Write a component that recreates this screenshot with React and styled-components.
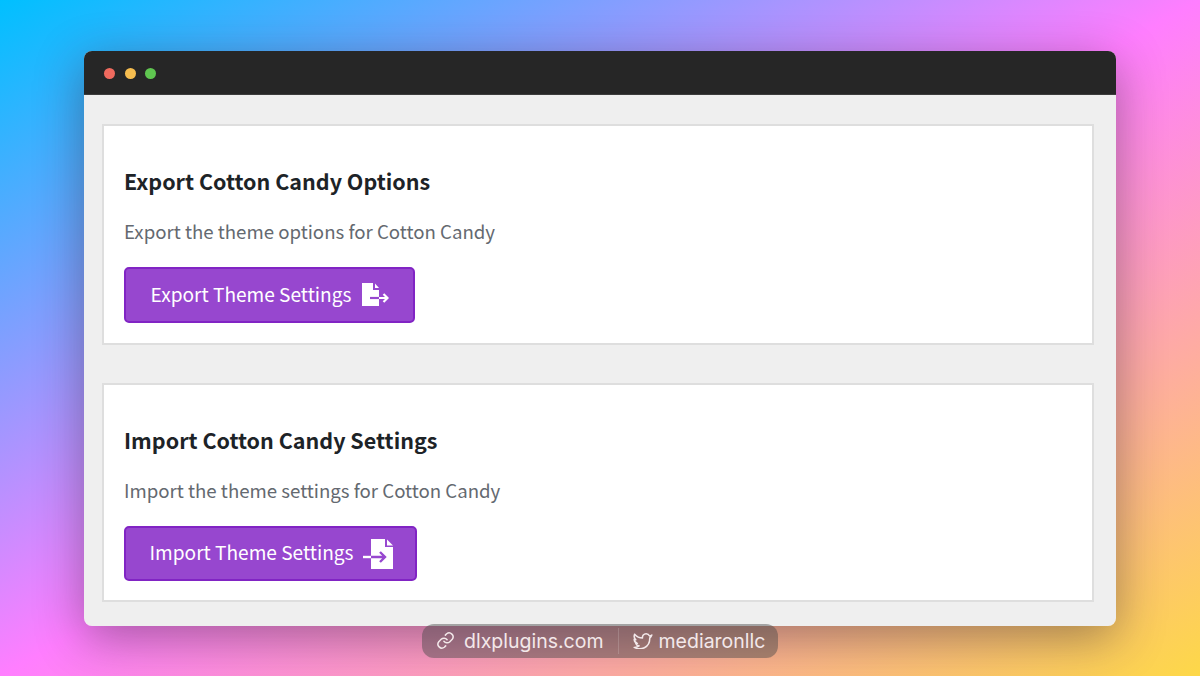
import React from "react";
import styled, { createGlobalStyle } from "styled-components";

const Global = createGlobalStyle`
  html, body { margin: 0; padding: 0; height: 100%; }
  body { font-family: "Noto Sans CJK SC", "Noto Sans", sans-serif; overflow: hidden; }
`;

const Page = styled.div`
  position: relative;
  width: 1200px;
  height: 676px;
  box-sizing: border-box;
  padding: 51px 84px 0;
  background: linear-gradient(to bottom right, #00c0ff 0%, #ff7eff 50%, #fdd848 100%);
  overflow: hidden;
`;

const Window = styled.div`
  width: 1032px;
  height: 575px;
  border-radius: 8px;
  overflow: hidden;
  display: flex;
  flex-direction: column;
  background: #efefef;
`;

const WindowShadow = styled.div`
  border-radius: 8px;
  box-shadow: 0 12px 48px rgba(40, 30, 40, 0.42);
`;

const TitleBar = styled.div`
  height: 44px;
  flex: none;
  box-sizing: border-box;
  padding: 1px 0 0 20px;
  display: flex;
  align-items: center;
  gap: 9.5px;
  background: #262626;
  border-bottom: 1px solid #3c3c3c;
`;

const Dot = styled.span`
  width: 11px;
  height: 11px;
  border-radius: 50%;
  background: ${(p) => p.$color};
`;

const Content = styled.div`
  flex: 1;
  display: flex;
  flex-direction: column;
  gap: 38px;
  padding: 29px 22px 0 18px;
`;

const Card = styled.section`
  height: ${(p) => p.$height}px;
  box-sizing: border-box;
  padding: 40px 20px 0;
  background: #fff;
  border: 2px solid #dedede;
`;

const Title = styled.h2`
  margin: 0;
  font-size: 21.5px;
  line-height: 30px;
  font-weight: 700;
  color: #1d2327;
`;

const Desc = styled.p`
  margin: 21px 0 0;
  font-size: 18.65px;
  line-height: 28px;
  font-weight: 400;
  color: #646970;
`;

const Button = styled.button`
  margin-top: 22px;
  height: ${(p) => p.$height}px;
  width: ${(p) => p.$width}px;
  box-sizing: border-box;
  display: flex;
  align-items: center;
  justify-content: center;
  gap: ${(p) => p.$gap}px;
  padding: 0 0 0 1px;
  background: #9747cf;
  border: 2px solid #8124c4;
  border-radius: 5px;
  color: #fff;
  font-family: inherit;
  font-size: 19.1px;
`;

const ButtonLabel = styled.span`
  padding-bottom: 3px;
`;

const Pill = styled.div`
  position: absolute;
  left: 422px;
  top: 624px;
  width: 356px;
  height: 34px;
  box-sizing: border-box;
  display: flex;
  align-items: center;
  padding: 0 0 1px 14px;
  border-radius: 12px;
  background: rgba(70, 70, 70, 0.45);
  color: #f3e8ea;
  font-family: Inter, "Liberation Sans", sans-serif;
  font-size: 19.5px;
`;

const PillItem = styled.span`
  display: flex;
  align-items: center;
  gap: ${(p) => p.$gap}px;
`;

const Divider = styled.span`
  width: 1px;
  height: 26px;
  margin: 0 14px;
  background: rgba(255, 255, 255, 0.16);
`;

const ExportIcon = () => (
  <svg width="27" height="24" viewBox="0 0 27 24">
    <path fill="#fff" d="M0 0h11v7h6v16H0z" />
    <path fill="#fff" d="M13 .5L17 5h-4z" />
    <path fill="none" stroke="#9747cf" strokeWidth="2.200" d="M8 15h9" />
    <path fill="none" stroke="#fff" strokeWidth="2.200" d="M17 15h8M21.500 11l4 4-4 4" />
  </svg>
);

const ImportIcon = () => (
  <svg width="30" height="30" viewBox="0 0 30 30">
    <path fill="#fff" d="M8 0h14v8h8v22H8z" />
    <path fill="#fff" d="M24 .5l6 6h-6z" />
    <path fill="none" stroke="#fff" strokeWidth="2.400" d="M0 18h8" />
    <path fill="none" stroke="#9747cf" strokeWidth="2.400" d="M8 18h14M17 13l5 5-5 5" />
  </svg>
);

const LinkIcon = () => (
  <svg width="19" height="19" viewBox="0 0 24 24" fill="none" stroke="#f3e8ea" strokeWidth="1.900" strokeLinecap="round" strokeLinejoin="round">
    <path d="M10 13a5 5 0 0 0 7.500.500l3-3a5 5 0 0 0-7-7l-1.700 1.700" />
    <path d="M14 11a5 5 0 0 0-7.500-.500l-3 3a5 5 0 0 0 7 7l1.700-1.700" />
  </svg>
);

const BirdIcon = () => (
  <svg width="20" height="16" viewBox="0 0 24 20" fill="none" stroke="#f3e8ea" strokeWidth="1.900" strokeLinejoin="round">
    <path d="M23 2.500c-.9 .7-1.800 1.100-2.800 1.300-.8-1.700-2.500-2.800-4.300-2.800-2.900 0-5 2.400-4.500 5.300C7.500 6.300 4 4.500 1.500 1.500c-1 2.600-.5 5.200 1.500 7-.8 0-1.500-.2-2-.5.100 2.500 1.600 4.300 4 5-.7.200-1.400.2-2.100.1.700 1.800 2.300 2.900 4.200 3C5.200 17.500 3 18.200 1 18c8 4 19.500 1 19.500-11.800 1-.8 1.900-2 2.500-3.700z" />
  </svg>
);

export default function App() {
  return (
    <>
      <Global />
      <Page>
        <WindowShadow>
          <Window>
            <TitleBar>
              <Dot $color="#ef6a5e" />
              <Dot $color="#f6bd4f" />
              <Dot $color="#5fc650" />
            </TitleBar>
            <Content>
              <Card $height={221}>
                <Title>Export Cotton Candy Options</Title>
                <Desc>Export the theme options for Cotton Candy</Desc>
                <Button $width={291} $height={56} $gap={11}>
                  <ButtonLabel>Export Theme Settings</ButtonLabel>
                  <ExportIcon />
                </Button>
              </Card>
              <Card $height={219}>
                <Title>Import Cotton Candy Settings</Title>
                <Desc>Import the theme settings for Cotton Candy</Desc>
                <Button $width={293} $height={55} $gap={9}>
                  <ButtonLabel>Import Theme Settings</ButtonLabel>
                  <ImportIcon />
                </Button>
              </Card>
            </Content>
          </Window>
        </WindowShadow>
        <Pill>
          <PillItem $gap={9}>
            <LinkIcon />
            dlxplugins.com
          </PillItem>
          <Divider />
          <PillItem $gap={6}>
            <BirdIcon />
            mediaronllc
          </PillItem>
        </Pill>
      </Page>
    </>
  );
}
